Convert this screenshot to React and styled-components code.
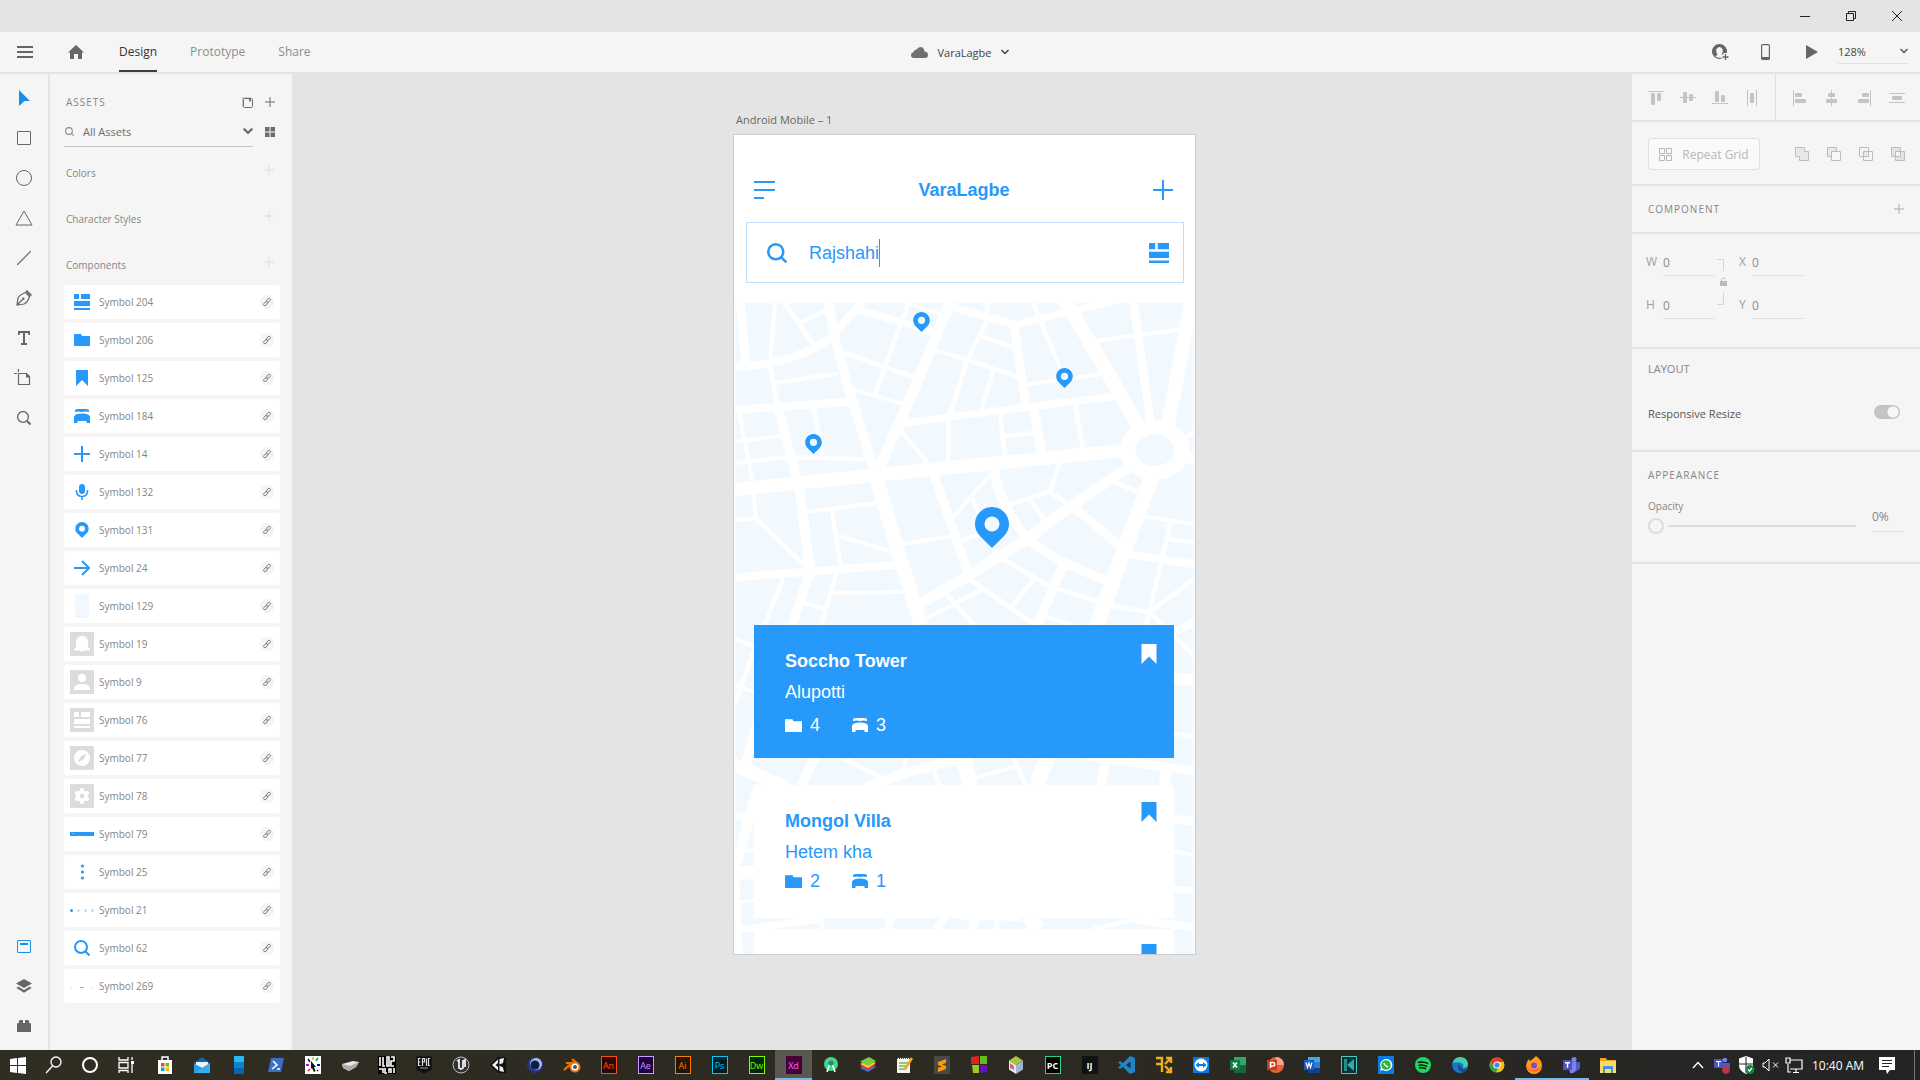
import React, { useState } from "react";
import styled, { createGlobalStyle } from "styled-components";

const ui = '"Open Sans", "Noto Sans", sans-serif';
const blue = "#2699fb";

const Global = createGlobalStyle`
  * { box-sizing: border-box; }
  body { margin: 0; font-family: ${ui}; font-size: 12px; color: #6e6e6e; background: #e4e4e4; overflow: hidden; }
  button, input, select { font: inherit; color: inherit; border: 0; background: none; padding: 0; margin: 0; outline: none; border-radius: 0; }
  button, a { display: flex; align-items: center; justify-content: center; color: inherit; text-decoration: none; }
  h1, h2, h3, p, ul { margin: 0; padding: 0; font-weight: 400; list-style: none; }
  svg { display: block; flex: none; }
`;

const Shell = styled.div`
  height: 100vh;
  display: grid;
  grid-template-rows: 32px 42px minmax(0, 1fr) 30px;
`;

/* ---------- window and top bars ---------- */
const TitleBar = styled.div`
  display: flex;
  justify-content: flex-end;
  color: #222;
`;
const WindowButton = styled.button`
  width: 46px;
`;
const TopBar = styled.header`
  display: grid;
  grid-template-columns: 1fr auto 1fr;
  background: #f5f5f5;
  border-bottom: 2px solid #e4e4e4;
`;
const TopLeft = styled.nav`
  display: flex;
  align-items: stretch;
  padding-left: 16px;
`;
const IconButton = styled.button`
  width: ${(p) => p.$w || 18}px;
  color: ${(p) => p.$color || "#666"};
`;
const Tabs = styled.div`
  display: flex;
  gap: 33px;
  margin-left: 34px;
`;
const Tab = styled.a`
  color: ${(p) => (p.$active ? "#333" : "#8e8e8e")};
  border-bottom: 2px solid ${(p) => (p.$active ? "#3c3c3c" : "transparent")};
`;
const HomeSlot = styled.div`
  display: flex;
  margin-left: 33px;
`;
const DocButton = styled.button`
  gap: 9px;
  font-size: 11px;
  color: #444;
`;
const TopRight = styled.div`
  display: flex;
  justify-content: flex-end;
  align-items: center;
  padding-right: 12px;
`;
const TopTools = styled.div`
  display: flex;
  gap: 28px;
  margin-right: 17px;
`;
const ZoomBox = styled.div`
  display: flex;
  align-items: center;
  width: 70px;
  height: 24px;
  margin-top: -1px;
  border-bottom: 1px solid #e0e0e0;
  color: #555;
  select {
    appearance: none;
    flex: 1;
    min-width: 0;
    font-size: 11px;
    color: #444;
  }
`;

/* ---------- body ---------- */
const Body = styled.div`
  display: grid;
  grid-template-columns: 50px 242px minmax(0, 1fr) 288px;
`;
const ToolBar = styled.nav`
  display: flex;
  flex-direction: column;
  justify-content: space-between;
  padding: 4px 0;
  background: #f5f5f5;
  border-right: 2px solid #e4e4e4;
`;
const ToolGroup = styled.div`
  display: flex;
  flex-direction: column;
`;
const ToolButton = styled.button`
  height: 40px;
  color: ${(p) => (p.$active ? "#1592e6" : "#666")};
`;

const AssetsPanel = styled.aside`
  background: #f5f5f5;
  padding: 16px 12px 0 14px;
`;
const PanelHeader = styled.div`
  display: flex;
  align-items: center;
  justify-content: space-between;
  height: 24px;
  padding: 0 5px 0 2px;
`;
const Caps = styled.h2`
  font-size: ${(p) => (p.$tight ? 11 : 10)}px;
  line-height: 14px;
  letter-spacing: ${(p) => (p.$tight ? 0 : 1)}px;
  color: #868686;
`;
const HeaderActions = styled.div`
  display: flex;
  gap: 12px;
  color: #6e6e6e;
`;
const FilterRow = styled.div`
  display: flex;
  align-items: center;
  justify-content: space-between;
  padding: 4px 5px 0 0;
`;
const FilterField = styled.div`
  display: flex;
  align-items: center;
  width: 189px;
  height: 29px;
  padding-bottom: 2px;
  border-bottom: 1px solid #c6c6c6;
  color: #6e6e6e;
  & > svg { color: #8e8e8e; margin-left: 1px; }
  input {
    flex: 1;
    min-width: 0;
    margin-left: 9px;
    font-size: 11px;
  }
`;
const GridToggle = styled.button`
  padding-bottom: 2px;
`;
const AssetHeading = styled.div`
  display: flex;
  align-items: center;
  justify-content: space-between;
  height: 46px;
  padding: 0 6px 0 2px;
  h3 { font-size: 10px; line-height: 14px; color: #868686; }
  button { color: #dcdcdc; margin-bottom: 6px; }
`;
const AssetGroups = styled.div`
  padding-top: 3px;
`;
const SymbolList = styled.ul`
  display: flex;
  flex-direction: column;
  gap: 4px;
  margin-top: -3px;
`;
const SymbolRow = styled.li`
  display: flex;
  align-items: center;
  height: 34px;
  padding: 0 6px;
  background: #fff;
  border-radius: 2px;
  font-size: 10px;
  color: #868686;
  span { flex: 1; margin-left: 5px; padding-bottom: 1px; }
`;
const Thumb = styled.div`
  display: grid;
  place-items: center;
  width: 24px;
  height: 24px;
  background: ${(p) => (p.$grey ? "#dcdcdc" : "transparent")};
  color: ${(p) => (p.$grey ? "#fff" : blue)};
`;
const LinkBadge = styled.button`
  width: 14px;
  height: 14px;
  border-radius: 7px;
  background: #f3f3f3;
  color: #777;
`;

/* ---------- canvas ---------- */
const Canvas = styled.main`
  display: flex;
  justify-content: center;
  padding: 37px 0 0 5px;
  overflow: hidden;
`;
const BoardColumn = styled.div`
  width: 463px;
`;
const BoardLabel = styled.p`
  height: 23px;
  padding-left: 3px;
  font-size: 11px;
  line-height: 18px;
  color: #666;
`;
const Artboard = styled.section`
  display: flex;
  flex-direction: column;
  height: 821px;
  background: #fff;
  border: 1px solid #ccc;
  font-family: "Liberation Sans", Arial, sans-serif;
  font-size: 18px;
  line-height: 20px;
  color: ${blue};
`;
const AppHeader = styled.header`
  display: flex;
  align-items: center;
  justify-content: space-between;
  padding: 0 22px 0 20px;
  margin-top: 43px;
  height: 24px;
  h1 { font-size: 18px; font-weight: 700; }
`;
const SearchBox = styled.form`
  display: flex;
  align-items: center;
  height: 61px;
  margin: 20px 11px 20px 12px;
  padding: 0 14px 0 20px;
  border: 1px solid #bfe0fd;
  input { width: 70px; margin-left: 22px; }
`;
const Caret = styled.i`
  width: 1px;
  height: 28px;
  margin-right: auto;
  background: ${blue};
`;
const MapArea = styled.div`
  position: relative;
  flex: 1;
  min-height: 0;
  overflow: hidden;
  padding: 322px 21px 0 20px;
`;
const MapLayer = styled.div`
  position: absolute;
  inset: 0;
  svg { width: 100%; height: 100%; }
`;
const PinMark = styled.button`
  position: absolute;
  left: ${(p) => p.$x}px;
  top: ${(p) => p.$y}px;
`;
const CardList = styled.div`
  position: relative;
  display: flex;
  flex-direction: column;
`;
const Card = styled.article`
  display: flex;
  justify-content: space-between;
  height: 133px;
  flex: none;
  margin-bottom: ${(p) => p.$after}px;
  padding: ${(p) => p.$top}px 17px 0 31px;
  background: ${(p) => (p.$filled ? blue : "#fff")};
  color: ${(p) => (p.$filled ? "#fff" : blue)};
  & > button { align-self: flex-start; }
`;
const CardText = styled.div`
  padding-top: ${(p) => 26 - p.$top}px;
  h2 { font-size: 18px; font-weight: 700; line-height: 20px; }
  p { line-height: 20px; margin-top: 11px; }
`;
const Counts = styled.div`
  display: flex;
  gap: 32px;
  margin-top: ${(p) => p.$gap}px;
  height: 22px;
  span { display: flex; align-items: center; gap: 8px; }
`;

/* ---------- inspector ---------- */
const Inspector = styled.aside`
  background: #f5f5f5;
`;
const Block = styled.section`
  height: ${(p) => p.$h}px;
  padding: ${(p) => p.$pad || "0 16px"};
  border-bottom: 2px solid #e4e4e4;
`;
const AlignBlock = styled(Block)`
  display: grid;
  grid-template-columns: 143px 1fr;
`;
const AlignGroup = styled.div`
  display: flex;
  align-items: center;
  justify-content: space-between;
  padding: 2px 15px 0 16px;
  color: #c4c4c4;
  & + & { border-left: 1px solid #e0e0e0; }
`;
const SplitBlock = styled(Block)`
  display: flex;
  align-items: center;
  justify-content: space-between;
`;
const RepeatButton = styled.button`
  width: 112px;
  height: 32px;
  gap: 10px;
  border: 1px solid #e0e0e0;
  border-radius: 3px;
  background: #fafafa;
  font-size: 12px;
  color: #b6b6b6;
`;
const BoolGroup = styled.div`
  display: flex;
  gap: 18px;
  margin-right: -1px;
  color: #bcbcbc;
`;
const TransformGrid = styled.div`
  display: grid;
  grid-template-columns: 17px 52px 24px 13px 52px;
  grid-template-rows: 27px 27px;
  row-gap: 16px;
  align-items: stretch;
  color: #a0a0a0;
  label { line-height: 25px; }
  input { width: 100%; border-bottom: 1px solid #e2e2e2; color: #8c8c8c; font-size: 12px; }
  & > svg { grid-column: 3; grid-row: 1 / 3; }
`;
const ToggleRow = styled.div`
  display: flex;
  align-items: center;
  justify-content: space-between;
  margin: 21px 4px 0 0;
  height: 32px;
  font-size: 11px;
  color: #555;
`;
const Toggle = styled.input`
  appearance: none;
  width: 26px;
  height: 14px;
  margin-bottom: 3px;
  border-radius: 7px;
  background: radial-gradient(circle at 19px 7px, #f8f8f8 5px, transparent 6px), #c4c4c4;
`;
const OpacityRow = styled.div`
  display: grid;
  grid-template-columns: 208px 32px;
  justify-content: space-between;
  margin-top: 12px;
  color: #868686;
  label { display: block; font-size: 10px; line-height: 14px; margin: 5px 0; color: #868686; }
`;
const Range = styled.input`
  appearance: none;
  display: block;
  width: 100%;
  height: 16px;
  &::-webkit-slider-runnable-track {
    height: 2px;
    background: linear-gradient(to right, transparent 20px, #dcdcdc 20px);
  }
  &::-webkit-slider-thumb {
    appearance: none;
    width: 16px;
    height: 16px;
    margin-top: -7px;
    border: 2px solid #dcdcdc;
    border-radius: 8px;
    background: #f5f5f5;
  }
`;
const OpacityValue = styled.input`
  width: 100%;
  height: 38px;
  padding-top: 7px;
  border-bottom: 1px solid #e0e0e0;
`;

/* ---------- taskbar ---------- */
const TaskBar = styled.footer`
  display: flex;
  justify-content: space-between;
  background: linear-gradient(to right, #302e22, #2b2921 60%, #242425);
  color: #fff;
`;
const TaskGroup = styled.div`
  display: flex;
`;
const AppButtons = styled.div`
  display: flex;
  margin-left: 2px;
`;
const TaskButton = styled.button`
  width: ${(p) => p.$w || 37}px;
  border-bottom: 2px solid ${(p) => (p.$open ? "#76b9ed" : "transparent")};
  background: ${(p) => (p.$active ? "#595852" : "none")};
  padding-top: 2px;
`;
const Badge = styled.span`
  display: grid;
  place-items: center;
  width: 16px;
  height: 18px;
  border: ${(p) => (p.$plain ? 0 : 1)}px solid ${(p) => p.$edge || p.$fg};
  background: ${(p) => p.$bg};
  color: ${(p) => p.$fg};
  font-size: 9px;
  font-weight: ${(p) => (p.$bold ? 700 : 400)};
  line-height: 9px;
`;
const Clock = styled.time`
  display: grid;
  place-items: center;
  width: 64px;
  font-size: 12px;
`;
const Edge = styled.span`
  width: 6px;
  margin-left: 10px;
  border-left: 1px solid #777;
`;

/* ---------- icons ---------- */
function Svg({ w = 16, h, vb, children, ...rest }) {
  return (
    <svg width={w} height={h || w} viewBox={vb || `0 0 ${w} ${h || w}`} fill="currentColor" aria-hidden="true" {...rest}>
      {children}
    </svg>
  );
}
const line = { fill: "none", stroke: "currentColor" };

const Plus = ({ s = 10, t = 1 }) => (
  <Svg w={s} vb="0 0 20 20"><path {...line} strokeWidth={(t * 20) / s} d="M10 0V20M0 10H20" /></Svg>
);
const Chevron = ({ w = 8, t = 1.5 }) => (
  <Svg w={w} h={Math.round(w * 0.75)} vb="0 0 8 6"><path {...line} strokeWidth={t} d="M.5 1L4 4.500 7.500 1" /></Svg>
);
const Dashboard = ({ s = 16 }) => (
  <Svg w={s} vb="0 0 16 16"><path d="M0 0h5v5H0zM7 0h9v5H7zM0 7h16v5H0zM0 14h16v2H0z" /></Svg>
);
const Folder = () => <Svg w={17} h={13} vb="0 0 16 12"><path d="M0 0h7l1 2h8v10H0z" /></Svg>;
const Bookmark = ({ w = 12, h = 16 }) => <Svg w={w} h={h} vb="0 0 12 16"><path d="M0 0h12v16L6 10 0 16z" /></Svg>;
const Bed = () => (
  <Svg w={16} h={16}><path d="M1 4V2.500Q1 1 3.500 1H12.500Q15 1 15 2.500V4Q11 3.200 8.500 4H7.500Q5 3.200 1 4zM0 8.500Q1.500 5.500 8 5.500T16 8.500V15H12.500V13H3.500V15H0z" /></Svg>
);
const Mic = () => (
  <Svg w={16}><rect x="5" y="0" width="6" height="10" rx="3" /><path {...line} strokeWidth="1.600" d="M2.500 6V7.500a5.500 5 0 0 0 11 0V6M8 12.500V16" /></Svg>
);
const Pin = ({ w = 14, h = 16 }) => (
  <Svg w={w} h={h} vb="0 0 34 41">
    <path fillRule="evenodd" d="M17 0C7.600 0 0 7.600 0 17c0 5 2 9 5 12L17 41 29 29c3-3 5-7 5-12C34 7.600 26.400 0 17 0zM17 9.500a7.500 7.500 0 1 1 0 15 7.500 7.500 0 0 1 0-15z" />
  </Svg>
);
const Arrow = () => <Svg><path {...line} strokeWidth="2" d="M0 8H15M8 1L15 8 8 15" /></Svg>;
const Magnifier = ({ s = 16, t = 2 }) => (
  <Svg w={s} vb="0 0 16 16"><circle {...line} strokeWidth={t} cx="7" cy="7" r="6" /><path {...line} strokeWidth={t} d="M11 11L15.500 15.500" /></Svg>
);
const Bell = () => <Svg><path d="M8 0C11.500 0 14 2.500 14 6V11l2 2v1.500H10L8 16 6 14.500H0V13l2-2V6C2 2.500 4.500 0 8 0z" /></Svg>;
const Person = () => <Svg><circle cx="8" cy="4" r="4" /><path d="M0 16V14Q1 10 8 10t8 4v2z" /></Svg>;
const Compass = () => <Svg><path fillRule="evenodd" d="M8 0a8 8 0 1 0 0 16A8 8 0 0 0 8 0zM12.500 3.500L9.500 9.500 3.500 12.500 6.500 6.500z" /></Svg>;
const Gear = () => (
  <Svg><path fillRule="evenodd" d="M6.500 0h3l.6 2.500 1.500.9L14 2.600l1.600 2.700-1.800 1.800v1.800l1.800 1.800L14 13.400l-2.400-.8-1.500.9L9.500 16h-3l-.6-2.500-1.500-.9-2.400.8L.4 10.700l1.800-1.800V7.100L.4 5.300 2 2.600l2.400.8 1.500-.9zM8 5.800a2.200 2.200 0 1 0 0 4.400 2.200 2.200 0 0 0 0-4.400z" /></Svg>
);
const LinkIcon = () => (
  <Svg w={8} vb="0 0 8 8"><g {...line} strokeWidth=".9" transform="rotate(-50 4 4)"><rect x="-.5" y="2.700" width="4.600" height="2.600" rx="1.300" /><rect x="3.900" y="2.700" width="4.600" height="2.600" rx="1.300" /></g></Svg>
);

const Texture = () => (
  <Svg w={14} h={24}><rect width="14" height="24" fill="#f0f8ff" /><path stroke="#fff" strokeWidth=".5" d="M0 8L14 6M3 0L8 24M14 14L2 20M11 0L9 12" /></Svg>
);
const Bar = () => <Svg w={24} h={24}><rect y="10" width="24" height="4" fill={blue} /><path fill="#fff" d="M3 11h1v1H3z" opacity=".7" /></Svg>;
const DotsV = () => <Svg w={16}><circle cx="8.500" cy="2" r="1.600" /><circle cx="8.500" cy="8" r="1.600" /><circle cx="8.500" cy="14" r="1.600" /></Svg>;
const DotsH = () => <Svg w={24}><circle cx="1.500" cy="12.500" r="1.500" /><g opacity=".3"><circle cx="8.500" cy="12.500" r="1.500" /><circle cx="15.500" cy="12.500" r="1.500" /><circle cx="22.500" cy="12.500" r="1.500" /></g></Svg>;
const Specks = () => <Svg w={24}><path d="M10 13h4v1h-4z" opacity=".7" /><path d="M1 13h1v1H1zM22 13h1v1h-1z" opacity=".4" /></Svg>;

const symbols = [
  ["Symbol 204", <Dashboard />],
  ["Symbol 206", <Svg w={16} h={12}><path d="M0 0h7l1 2h8v10H0z" /></Svg>],
  ["Symbol 125", <Bookmark />],
  ["Symbol 184", <Bed />],
  ["Symbol 14", <Plus s={16} t={2} />],
  ["Symbol 132", <Mic />],
  ["Symbol 131", <Pin />],
  ["Symbol 24", <Arrow />],
  ["Symbol 129", <Texture />],
  ["Symbol 19", <Bell />, true],
  ["Symbol 9", <Person />, true],
  ["Symbol 76", <Dashboard />, true],
  ["Symbol 77", <Compass />, true],
  ["Symbol 78", <Gear />, true],
  ["Symbol 79", <Bar />],
  ["Symbol 25", <DotsV />],
  ["Symbol 21", <DotsH />],
  ["Symbol 62", <Magnifier />],
  ["Symbol 269", <Specks />],
];

const tools = [
  ["Select", <Svg w={11} h={16}><path d="M0 0L11 11H5.500L0 16z" /></Svg>],
  ["Rectangle", <Svg w={14}><rect {...line} x=".5" y=".5" width="13" height="13" rx=".5" /></Svg>],
  ["Ellipse", <Svg w={16}><circle {...line} cx="8" cy="8" r="7.500" /></Svg>],
  ["Polygon", <Svg w={18} h={16}><path {...line} d="M9 1L17 15H1z" /></Svg>],
  ["Line", <Svg w={14}><path {...line} strokeWidth="1.200" d="M0 14L14 0" /></Svg>],
  ["Pen", <Svg w={16}><path {...line} strokeWidth="1.200" d="M1 15L2 8Q4 4.500 9.500 2.500L13.500 6.500Q12 12 8 14zM1 15L6.500 9.500" /><circle cx="7.300" cy="8.800" r="1.200" /><path d="M9.500 1.500L11 0l5 5-1.500 1.500z" /></Svg>],
  ["Text", <Svg w={12} h={14}><path d="M0 0h12v4h-1.500L10 2H7v10h2v2H3v-2h2V2H2L1.500 4H0z" /></Svg>],
  ["Artboard", <Svg w={20} h={18}><path {...line} strokeWidth="1.200" d="M4.500 0V3M0 4.500H3M4.500 4.500H12.500L15.500 7.500V15.500H4.500z" /><path d="M12 4L16 8.500H12z" /></Svg>],
  ["Zoom", <Svg w={14}><circle {...line} strokeWidth="1.300" cx="6" cy="6" r="5.400" /><path {...line} strokeWidth="2" d="M10 10L13.500 13.500" /></Svg>],
];
const panels = [
  ["Assets", <Svg w={14} h={13}><rect {...line} x=".5" y=".5" width="13" height="12" rx=".5" /><path d="M3 3h8v2H3z" /></Svg>],
  ["Layers", <Svg w={16} h={14}><path d="M8 0L16 4.500 8 9 0 4.500zM2 7.500L8 11 14 7.500 15.500 9 8 13.800.5 9z" /></Svg>],
  ["Plugins", <Svg w={14} h={12}><path d="M0 4Q0 3 1 3H2V1Q2 0 3 0H5Q6 0 6 1V3H8V1Q8 0 9 0h2q1 0 1 1V3h1q1 0 1 1v8H0z" /></Svg>],
];

const alignA = [
  ["Align top", <Svg><path d="M0 1h16v1H0z" /><rect x="3" y="3" width="4" height="12" rx="1" /><rect x="9" y="3" width="4" height="8" rx="1" /></Svg>],
  ["Align middle", <Svg><path d="M0 7h16v1H0z" /><rect x="3" y="2" width="4" height="11" rx="1" /><rect x="9" y="4" width="4" height="7" rx="1" /></Svg>],
  ["Align bottom", <Svg><path d="M0 13h16v1H0z" /><rect x="3" y="1" width="4" height="11" rx="1" /><rect x="9" y="5" width="4" height="7" rx="1" /></Svg>],
  ["Distribute horizontally", <Svg><path d="M3 0h1v16H3zM12 0h1v16h-1z" /><rect x="6" y="3" width="4" height="10" rx="1" /></Svg>],
];
const alignB = [
  ["Align left", <Svg><path d="M1 0h1v16H1z" /><rect x="3" y="3" width="7" height="4" rx="1" /><rect x="3" y="9" width="11" height="4" rx="1" /></Svg>],
  ["Align center", <Svg><path d="M7 0h1v16H7z" /><rect x="4" y="3" width="7" height="4" rx="1" /><rect x="2" y="9" width="11" height="4" rx="1" /></Svg>],
  ["Align right", <Svg><path d="M13 0h1v16h-1z" /><rect x="5" y="3" width="7" height="4" rx="1" /><rect x="1" y="9" width="11" height="4" rx="1" /></Svg>],
  ["Distribute vertically", <Svg><path d="M0 3h16v1H0zM0 12h16v1H0z" /><rect x="3" y="6" width="10" height="4" rx="1" /></Svg>],
];
const bools = [
  ["Add", <Svg w={14}><path {...line} fill="#e8e8e8" d="M.5.5H9.500V4.500H13.500V13.500H4.500V9.500H.5z" /></Svg>],
  ["Subtract", <Svg w={14}><path {...line} fill="#e8e8e8" d="M.5.5H9.500V9.500H.5z" /><path {...line} fill="#f8f8f8" d="M4.500 4.500H13.500V13.500H4.500z" /></Svg>],
  ["Intersect", <Svg w={14}><path fill="#e8e8e8" d="M4.500 4.500h5v5h-5z" /><path {...line} d="M.5.5H9.500V9.500H.5zM4.500 4.500H13.500V13.500H4.500z" /></Svg>],
  ["Exclude overlap", <Svg w={14}><path {...line} fill="#e4e4e4" fillRule="evenodd" d="M.5.5H9.500V9.500H.5zM4.500 4.500H13.500V13.500H4.500z" /></Svg>],
];

/* ---------- street map ---------- */
const roads = [
  [27, "M61 0L78 190"],
  [24, "M40 194C90 188 120 186 148 180Q270 155 335 100L430 -5"],
  [12, "M165 0L150 180"], [13, "M150 180L170 300"],
  [14, "M190 -5L285 130"], [12, "M240 58L320 22"],
  [28, "M325 -5L346 110L390 270L465 510"],
  [43, "M465 515L472 538L602 966"],
  [22, "M420 22L640 86"], [13, "M568 -5L535 80L465 275"], [10, "M565 3L670 35"],
  [32, "M692 -5L590 240L480 490"],
  [24, "M695 12L885 65"], [22, "M885 65L1190 -8"],
  [26, "M882 65L918 305"], [28, "M940 310L965 450"],
  [12, "M635 138L740 170L895 222"], [14, "M805 -5L797 60L740 175L690 335"],
  [12, "M785 100L885 135"], [13, "M820 200L783 325"],
  [12, "M937 -5L1020 195"], [12, "M915 246L1145 213"],
  [42, "M1035 -8L1058 31L1205 281L1262 380"],
  [25, "M1240 -5L1293 370"], [42, "M1414 -5L1358 291L1340 380"],
  [12, "M1125 114L1385 79"], [13, "M355 143L585 224"],
  [12, "M160 241L355 211"], [12, "M390 257L545 302"],
  [24, "M40 321L390 296"], [28, "M172 305L228 521"], [30, "M233 520L238 558L270 800"],
  [12, "M58 331L97 531"], [11, "M40 416L185 399"],
  [12, "M40 481L200 462L435 469"], [13, "M280 310L308 456"],
  [40, "M40 560L470 516L830 480L1215 442"],
  [22, "M545 361L920 312L1190 280"],
  [14, "M685 351V480"], [13, "M540 379L628 486"], [13, "M840 331L855 460"],
  [12, "M850 400L945 389"], [14, "M1065 300L1089 440"],
  [46, "M1295 520L1130 966L950 1446"],
  [32, "M1235 487L1050 611L930 702L740 821L600 902"],
  [28, "M820 495Q840 610 920 705"], [26, "M910 695Q980 765 1165 835"],
  [27, "M640 510L748 820"], [12, "M812 514L700 641"],
  [13, "M757 586L832 760"], [12, "M725 712L800 685"], [12, "M550 722L700 699"],
  [13, "M1020 475L990 566L868 606"], [14, "M985 562L1060 616"], [26, "M1062 614L1205 733"],
  [13, "M930 591L978 660"], [13, "M1175 534L1262 571"],
  [12, "M1275 641L1430 665"], [13, "M1352 656L1288 928L1278 970"],
  [12, "M1345 709L1430 719"], [24, "M1230 755L1430 785"],
  [13, "M1430 822L1288 928L1170 908"], [12, "M1290 929L1335 975"],
  [13, "M840 763L990 851L1145 898"], [14, "M942 829L870 916"],
  [28, "M1030 785L950 970"], [12, "M970 939L1065 968"], [14, "M745 826L945 966"],
  [14, "M672 864L765 970"], [12, "M788 859L612 950"],
  [12, "M40 653L107 646L101 570"], [14, "M103 642L262 795"],
  [12, "M258 626L468 601"], [13, "M335 618L362 790"], [12, "M350 697L518 747"],
  [24, "M40 823L525 786"], [29, "M272 800L215 970"], [13, "M190 826L132 970"],
  [13, "M348 811L303 970"], [12, "M335 871L550 866"], [12, "M250 899L318 919"],
  [12, "M40 1007L108 1031"], [14, "M103 1040L45 1201"], [12, "M45 1146L105 1168"],
  [30, "M112 1260L75 1395"], [40, "M40 1384L200 1455"], [28, "M285 1360L243 1450"],
  [14, "M365 1362L500 1434"], [12, "M560 1360L546 1410"], [28, "M720 1370Q560 1400 430 1458"],
  [13, "M640 1395L658 1450"], [46, "M728 1360L752 1450"], [12, "M762 1426L888 1390"],
  [14, "M880 1360L918 1450"], [28, "M1160 1360L1143 1450"], [26, "M1100 1360L1430 1405"],
  [32, "M1340 1395L1332 1450"], [22, "M1355 994L1430 952"], [14, "M1362 998L1430 1066"],
  [34, "M1360 1126L1430 1132"], [12, "M1355 1290L1430 1304"], [26, "M1350 1546L1430 1557"],
  [12, "M1350 1643L1430 1657"], [20, "M1350 1757L1430 1765"], [24, "M1250 1850L1430 1874"],
  [24, "M40 1541H110"], [32, "M112 1460L50 1680"], [12, "M40 1641L110 1643"],
  [40, "M40 1709H110"], [10, "M40 1796L110 1793"], [18, "M45 1640L60 1960"],
  [22, "M50 1882L300 1848"], [14, "M300 1840L310 1880"], [26, "M515 1840L502 1880"],
  [24, "M680 1838L650 1880"], [30, "M770 1840L755 1880"], [14, "M830 1845L828 1880"],
  [14, "M720 1845L900 1846"], [46, "M925 1838L955 1880"], [14, "M1250 1848L1120 1878"],
  [8, "M42 0V1953M1424 0V1953"],
];

function StreetMap() {
  return (
    <MapLayer>
      <svg viewBox="42 0 1383 1953" preserveAspectRatio="xMinYMin slice" aria-hidden="true">
        <rect x="42" width="1383" height="1953" fill="#f1f9ff" />
        <g fill="none" stroke="#fff">
          {roads.map(([w, d]) => <path key={d} strokeWidth={w} d={d} />)}
        </g>
        <ellipse cx="1305" cy="441" rx="106" ry="89" fill="#fff" />
        <ellipse cx="1305" cy="441" rx="58" ry="48" fill="#f1f9ff" />
        <path stroke="#fff" strokeWidth="12" d="M1390 405L1430 385" />
        <path stroke="#fff" strokeWidth="34" d="M1385 462L1430 468" />
      </svg>
    </MapLayer>
  );
}

function Listing({ title, area, rooms, beds, filled, top, gap, after }) {
  return (
    <Card $filled={filled} $top={top} $after={after}>
      <CardText $top={top}>
        {title && (
          <>
            <h2>{title}</h2>
            <p>{area}</p>
            <Counts $gap={gap}>
              <span><Folder />{rooms}</span>
              <span><Bed />{beds}</span>
            </Counts>
          </>
        )}
      </CardText>
      <button aria-label="Bookmark"><Bookmark w={16} h={20} /></button>
    </Card>
  );
}

/* ---------- taskbar icons ---------- */
const T = (props) => <Svg w={18} {...props} />;
const startApps = [
  ["Start", <T><path d="M1 3l7-1v7H1zM9 2l8-1v8H9zM1 10h7v7l-7-1zM9 10h8v8l-8-1z" /></T>],
  ["Search", <T><circle {...line} strokeWidth="1.300" cx="11" cy="6" r="5" /><path {...line} strokeWidth="1.300" d="M7.500 10L1 17" /></T>],
  ["Cortana", <T><circle {...line} strokeWidth="2" cx="9" cy="9" r="7" /></T>],
  ["Task view", <T><path {...line} strokeWidth="1.300" d="M2 1V4H11V1M2 6.500H11V12H2zM2 17V14.500H11V17M15 1V4M15 7V17" /><path d="M14 5h3v3h-3z" /></T>],
];
const apps = [
  ["Store", <T><path {...line} strokeWidth="1.500" d="M6 5V1H12V5" /><path d="M2 4h14v14H2z" /><path fill="#f25022" d="M5 7h3.500v3.500H5z" /><path fill="#7fba00" d="M9.500 7H13v3.500H9.500z" /><path fill="#00a4ef" d="M5 11.500h3.500V15H5z" /><path fill="#ffb900" d="M9.500 11.500H13V15H9.500z" /></T>],
  ["Mail", <T><path fill="#0f64b5" d="M1 7l8-6 8 6v10H1z" /><path fill="#e8f4fb" d="M3 6h12v3l-6 3-6-3z" /><path fill="#27a0ea" d="M1 7l8 6 8-6v10H1z" /><path fill="#36aef0" d="M1 17l16-10v10z" /></T>],
  ["Phone", <T><path fill="#2bb9ea" d="M4 0h10v18H4z" /><path fill="#0a84d0" d="M4 6h10v12H4z" /><path fill="#0764b0" d="M4 12h10v6H4z" /></T>],
  ["PowerShell", <T><path fill="#3a6fc4" d="M4 2h13l-3 14H1z" /><path fill="none" stroke="#fff" strokeWidth="1.600" d="M6 5l4 4-5 4M10 13h3" /></T>],
  ["Cursor tool", <T><path fill="#fff" d="M1 0h16v18H1z" /><path stroke="#d0d" strokeWidth="2" d="M2 9h3" /><path stroke="#00f" strokeWidth="2" d="M13 9h3" /><path stroke="#fa0" strokeWidth="1.500" d="M9 1v3" /><path stroke="#0a4" strokeWidth="1.500" d="M12 5l2-3" /><path stroke="#d22" strokeWidth="1.500" d="M4 15l2-2" /><path stroke="#222" strokeWidth="1.500" d="M4 3l2 3M14 15l-1-1" /><path fill="#111" d="M7 5l5 6h-2l1.500 4-1.500 1-2-4-1 1z" /></T>],
  ["SketchBook", <T><path fill="#e6e6e6" d="M1 8l11-3 6 1-3 5-7 4-6-3z" /><path fill="#aaa" d="M1 8l8 2 9-4-3 5-7 4-6-3z" /></T>],
  ["Pencil", <T><path fill="#000" d="M0 0h18v18H0z" /><path stroke="#fff" strokeWidth="1.600" fill="none" d="M2 1v9M5 1v9h2M9 1h2v9H9zM13 1h3v4h-3v5h3M1 13h4v4M7 12v5h2M11 17v-4h2v4M16 12v5" /></T>],
  ["Epic Games", <T><path fill="#111" stroke="#333" strokeWidth=".6" d="M1 0h16v14l-8 4-8-4z" /><path stroke="#ddd" fill="none" strokeWidth="1.200" d="M5.500 2.500H3.500v7h2M3.500 6h2M7.500 10V2.500H9.500v3.500H7.500M11.500 2.500v7.500M15 2.500h-1.500v7H15" /><path stroke="#999" d="M5 12h8" /></T>],
  ["Unreal", <T><circle cx="9" cy="9" r="8" fill="#333" stroke="#bbb" /><path stroke="#eee" fill="none" strokeWidth="1.800" d="M5 5l2-1v8l2 1 2-1V5l2-1v7" /></T>],
  ["Unity", <T><path fill="#111" d="M1 9L9 1l8 0v16l-8 0z" /><path fill="#f0f0f0" d="M3 9L9 3.500V7L6.500 9 9 11v3.500zM10.500 3L15 2l-1 5-3.500 1.500zM10.500 9.500L14 11.500 15 16l-4.500-1z" /></T>],
  ["Cinema 4D", <T><circle cx="9" cy="9" r="8" fill="#24377e" /><circle cx="10" cy="8" r="6" fill="#aebbe4" /><circle cx="9" cy="9" r="4.500" fill="#0d1c4a" /></T>],
  ["Blender", <T><path stroke="#ea7600" strokeWidth="2.200" fill="none" d="M1 14l9-8M3 7h9M9 3l5 4" /><circle cx="12" cy="11" r="5.500" fill="#ea7600" /><circle cx="12" cy="11" r="3.500" fill="#fff" /><circle cx="12" cy="11" r="2" fill="#265787" /></T>],
  ["Animate", <Badge $fg="#ff4a1c" $bg="#2a0a00">An</Badge>],
  ["After Effects", <Badge $fg="#cf96fd" $bg="#1f0040">Ae</Badge>],
  ["Illustrator", <Badge $fg="#ff7c00" $bg="#261300">Ai</Badge>],
  ["Photoshop", <Badge $fg="#00c8ff" $bg="#001d26">Ps</Badge>],
  ["Dreamweaver", <Badge $fg="#75ff00" $bg="#002606">Dw</Badge>],
  ["XD", <Badge $plain $fg="#ff61f6" $bg="#470137">Xd</Badge>, "active"],
  ["Android Studio", <T><circle cx="9" cy="8" r="7" fill="#3ddc84" /><path stroke="#fff" strokeWidth="1.600" fill="none" d="M9 5L5 16M9 5l4 11" /><circle cx="9" cy="7" r="2.600" fill="#3a7d96" /></T>],
  ["BlueStacks", <T><path fill="#3573d8" d="M1 12l8 4 8-5-8-3z" /><path fill="#e33" d="M1 10l8 4 8-5-8-3z" /><path fill="#fc3" d="M1 8l8 4 8-5-8-3z" /><path fill="#7c4" d="M1 5.500L10 1l7 4-8 5z" /></T>],
  ["Notepad++", <T><path fill="#f4f4f4" d="M1 2h13v15H1z" /><path stroke="#7b5" strokeWidth="1.500" d="M3 7h9M3 10h8M3 13h7" /><path stroke="#444" strokeWidth="2" strokeDasharray="1 1" d="M1 2h13" /><path stroke="#f3a51c" strokeWidth="2.500" d="M9 13l7-11" /></T>],
  ["Sublime Text", <T><path fill="#484848" d="M1 0h16v18H1z" /><path fill="#ff9800" d="M5 6l8-3v4l-4 1.500L13 10v3l-8 3v-4l4-1.500L5 9z" /></T>],
  ["WinMerge", <T><path fill="#d22" d="M1 1l8-1v8H1z" /><path fill="#6b2" d="M10 0h7v8h-7z" /><path fill="#9c2" d="M2 9h7v8h-6z" /><path fill="#61b" d="M10 9h7v7l-7 1z" /></T>],
  ["NetBeans", <T><path fill="#a6c73a" d="M9 0l7 4.500-7 4.500-7-4.500z" /><path fill="#e8e8ef" d="M2 4.500L9 9v9l-7-4.500z" /><path fill="#9db5da" d="M16 4.500L9 9v9l7-4.500z" /><path fill="#c33" d="M3 7l4 3v4l-4-2z" opacity=".7" /></T>],
  ["PyCharm", <Badge $bold $edge="#21d789" $fg="#fff" $bg="#000">PC</Badge>],
  ["IntelliJ IDEA", <Badge $bold $plain $fg="#fff" $bg="#111">IJ</Badge>],
  ["VS Code", <T><path fill="#1f86cc" d="M12 0l5 2v14l-5 2-7-7-3 2-2-1.500L3 9 0 6.500 2 5l3 2zM12.500 5.500L8 9l4.500 3.500z" fillRule="evenodd" /></T>],
  ["VMware", <T><path stroke="#edb01c" strokeWidth="2.400" fill="none" d="M1 2h6v6H1M11 2h5v5M16 2l-6 6M16 11v5h-5M10 10l6 6M7 8v8" /></T>],
  ["TeamViewer", <T><path fill="#0a7be0" d="M1 1h16v16H1z" /><circle cx="9" cy="9" r="6.500" fill="#fff" /><path fill="#0a7be0" d="M3.500 9L7 6v2h4V6l3.500 3L11 12v-2H7v2z" /></T>],
  ["Excel", <T><path fill="#2faa6a" d="M5 1h12v16H5z" /><path fill="#17643d" d="M11 9h6v8h-12v-4h6z" /><path fill="#107c41" d="M1 4h10v10H1z" /><path stroke="#fff" strokeWidth="1.600" d="M4 6.500l4 5M8 6.500l-4 5" /></T>],
  ["PowerPoint", <T><circle cx="10" cy="9" r="8" fill="#e8603c" /><path fill="#ffa088" d="M10 1a8 8 0 0 1 8 8h-8z" /><path fill="#c43e1c" d="M1 4h10v10H1z" /><path stroke="#fff" strokeWidth="1.500" fill="none" d="M4.500 12V6.500H7a1.500 1.500 0 0 1 0 3.500H5" /></T>],
  ["Word", <T><path fill="#41a5ee" d="M5 1h12v5H5z" /><path fill="#2b7cd3" d="M5 6h12v6H5z" /><path fill="#103f91" d="M5 12h12v5H5z" /><path fill="#185abd" d="M1 4h10v10H1z" /><path stroke="#fff" strokeWidth="1.200" fill="none" d="M3 6.500l1.500 5L6 7l1.500 4.500 1.500-5" /></T>],
  ["Filmora", <T><path fill="#08303a" stroke="#45cdbf" d="M1.500 .5h15v17h-15z" /><path fill="#1f8f88" d="M4 3h3v12H4z" /><path fill="#41c9bb" d="M7 9l7-6v12z" opacity=".8" /></T>],
  ["WhatsApp", <T><path fill="#0a7be0" d="M1 0h16v18H1z" /><path fill="#fff" d="M9 3a6 6 0 1 1-3 11l-3 1 1-3A6 6 0 0 1 9 3z" /><circle cx="9" cy="9" r="4.800" fill="#2cb742" /><path stroke="#fff" strokeWidth="1.400" fill="none" d="M7 7q.5 3 4 4" /></T>],
  ["Spotify", <T><circle cx="9" cy="9" r="8" fill="#1ed760" /><path stroke="#111" strokeWidth="1.500" fill="none" d="M4 6.500q5-1.500 10 1M4.500 9.500q4-1.200 8.500 1M5 12q3.500-1 7 .8" /></T>],
  ["Edge", <T><circle cx="9" cy="9" r="8" fill="#1b75c9" /><path fill="#45d0a8" d="M1.500 7Q4 1 9 1q7 0 8 7 0 4-5 3.500 1.500-4-3-5Q4 6 1.500 7z" /><path fill="#114a8b" d="M8 8q-3 5 3 8 4-.5 5-3-5 2-8-5z" /></T>],
  ["Chrome", <T><circle cx="9" cy="9" r="7.500" fill="#fbc116" /><path fill="#e33b2e" d="M2 6Q4.500 1.500 9 1.500T16 6H9L6 10z" /><path fill="#2ba24c" d="M2 6l4.500 6H10l-2 4.500Q0 15 2 6z" /><circle cx="9" cy="9" r="3.500" fill="#fff" /><circle cx="9" cy="9" r="2.600" fill="#4285f4" /></T>],
  ["Firefox", <T><path fill="#ff9a1f" d="M9 2l2-2q6 4 6 10a8 8 0 0 1-16 0q0-4 3-7l1 2z" /><path fill="#ff4f3a" d="M1 9q2 6 9 5 4-1 6-3a8 8 0 0 1-15-2z" /><circle cx="9" cy="9.500" r="3" fill="#7a4cd8" /></T>, "open"],
  ["Teams", <T><circle cx="12" cy="3.500" r="2.500" fill="#7b83eb" /><path fill="#5059c9" d="M11 6h7v6q-2 4-5 3z" /><path fill="#7b83eb" d="M6 6h8v8q-2 4-6 3z" /><path fill="#4b53bc" d="M1 4h9v10H1z" /><path stroke="#fff" strokeWidth="1.400" d="M3 6.700h5M5.500 6.700v5" /></T>, "open"],
  ["Explorer", <T><path fill="#e9a91c" d="M1 2h6l1 2h9v4H1z" /><path fill="#ffd968" d="M1 5h16v12H1z" /><path fill="#3c97e0" d="M4 10h10v7h-2v-4H6v4H4z" /></T>],
];
const tray = [
  ["Show hidden icons", <Svg w={12} h={8}><path {...line} strokeWidth="1.400" d="M1 7L6 1.500 11 7" /></Svg>],
  ["Teams status", <T><circle cx="12" cy="4" r="2.300" fill="#7b83eb" /><path fill="#5059c9" d="M7 7h10v5H7z" /><path fill="#4b53bc" d="M1 3h9v9H1z" /><path stroke="#fff" strokeWidth="1.200" d="M3 5.500h5M5.500 5.500v5" /><circle cx="13" cy="14" r="3.800" fill="#c4314b" /></T>],
  ["Security", <T><path d="M9 0l7 2.500V9q0 6-7 9-7-3-7-9V2.500z" /><path stroke="#222" strokeWidth="1" d="M9 1v16M2 8h14" /><circle cx="13" cy="13.500" r="4.500" fill="#10893e" /><path stroke="#fff" strokeWidth="1.200" fill="none" d="M11 13.500l1.500 1.500 2.500-3" /></T>],
  ["Muted", <T><path {...line} d="M2 7h2l4-4v12l-4-4H2zM12 6.500l5 5M17 6.500l-5 5" /></T>],
  ["Network", <T><path {...line} strokeWidth="1.200" d="M5 4H17V13H5M11 13V16M8 16.500H14M3 8V16H6M1 2H5V7H1z" /></T>],
];

export default function App() {
  const [query, setQuery] = useState("Rajshahi");
  const [filter, setFilter] = useState("All Assets");
  const [opacity, setOpacity] = useState(0);
  const [resize, setResize] = useState(true);

  return (
    <>
      <Global />
      <Shell>
        <TitleBar>
          <WindowButton aria-label="Minimize"><Svg w={10}><path {...line} d="M0 5.500H10" /></Svg></WindowButton>
          <WindowButton aria-label="Restore"><Svg w={10}><path {...line} d="M.5 2.500H7.500V9.500H.5zM2.500 2.500V.5H9.500V7.500H7.500" /></Svg></WindowButton>
          <WindowButton aria-label="Close"><Svg w={10}><path {...line} d="M0 0L10 10M10 0L0 10" /></Svg></WindowButton>
        </TitleBar>

        <TopBar>
          <TopLeft>
            <IconButton aria-label="Menu"><Svg w={16} h={12}><path d="M0 0h16v2H0zM0 5h16v2H0zM0 10h16v2H0z" /></Svg></IconButton>
            <HomeSlot>
              <IconButton aria-label="Home"><Svg w={16} h={14}><path d="M8 0L16 7.500H14V14H10V9H6V14H2V7.500H0z" /></Svg></IconButton>
            </HomeSlot>
            <Tabs>
              <Tab href="#design" $active>Design</Tab>
              <Tab href="#prototype">Prototype</Tab>
              <Tab href="#share">Share</Tab>
            </Tabs>
          </TopLeft>
          <DocButton>
            <Svg w={17} h={11}><path fill="#707070" d="M3 11Q0 11 0 8 0 5.500 2.500 5.200 3 2.500 5.500 2.500 7 0 9.500 0 13 0 13.500 4.500 17 4.500 17 8 17 11 14 11z" /></Svg>
            VaraLagbe
            <Chevron />
          </DocButton>
          <TopRight>
            <TopTools>
              <IconButton aria-label="Invite"><Svg w={17} h={16}><circle {...line} strokeWidth="1.200" cx="7.500" cy="7.500" r="6.900" /><path fillRule="evenodd" d="M7.500 .5a7 7 0 0 0-5 12L5.500 11Q4 8.500 4.300 5.500 5 3 7.500 3T10.700 5.500Q11 8.500 9.500 11L13 12Q15 9.500 14.500 6.500 13 .5 7.500 .5z" /><path stroke="#f5f5f5" strokeWidth="5" d="M14 9V16M9.500 13H17" /><path {...line} strokeWidth="1.300" d="M13.500 10V16M10.500 13H16.500" /></Svg></IconButton>
              <IconButton aria-label="Device preview"><Svg w={10} h={16}><rect {...line} x=".6" y=".6" width="7.800" height="14.800" rx="1" strokeWidth="1.200" /><path d="M0 13h9v2H0z" /></Svg></IconButton>
              <IconButton aria-label="Play"><Svg w={12} h={14}><path d="M0 0L12 7 0 14z" /></Svg></IconButton>
            </TopTools>
            <ZoomBox>
              <select aria-label="Zoom level" defaultValue="128%"><option>128%</option><option>100%</option></select>
              <Chevron />
            </ZoomBox>
          </TopRight>
        </TopBar>

        <Body>
          <ToolBar>
            <ToolGroup>
              {tools.map(([name, icon], i) => <ToolButton key={name} aria-label={name} $active={i === 0}>{icon}</ToolButton>)}
            </ToolGroup>
            <ToolGroup>
              {panels.map(([name, icon], i) => <ToolButton key={name} aria-label={name} $active={i === 0}>{icon}</ToolButton>)}
            </ToolGroup>
          </ToolBar>

          <AssetsPanel>
            <PanelHeader>
              <Caps>ASSETS</Caps>
              <HeaderActions>
                <button aria-label="Library"><Svg w={11}><path fill="#ccc" d="M0 0h9v2H2v8H0z" /><rect {...line} x="1.500" y="1.500" width="9" height="9" rx="1" /><path d="M7 1h2v4L8 4 7 5z" /></Svg></button>
                <button aria-label="Add asset"><Plus s={10} /></button>
              </HeaderActions>
            </PanelHeader>
            <FilterRow>
              <FilterField>
                <Magnifier s={9} t={2} />
                <input aria-label="Filter assets" value={filter} onChange={(e) => setFilter(e.target.value)} />
                <button aria-label="Asset types"><Chevron w={10} t={1.800} /></button>
              </FilterField>
              <GridToggle aria-label="Grid view"><Svg w={10}><path d="M0 0h4.500v4.500H0zM5.500 0H10v4.500H5.500zM0 5.500h4.500V10H0zM5.500 5.500H10V10H5.500z" /></Svg></GridToggle>
            </FilterRow>
            <AssetGroups>
              {["Colors", "Character Styles", "Components"].map((name) => (
                <AssetHeading key={name}>
                  <h3>{name}</h3>
                  <button aria-label={`Add ${name}`}><Plus s={10} /></button>
                </AssetHeading>
              ))}
            </AssetGroups>
            <SymbolList>
              {symbols.map(([name, icon, grey]) => (
                <SymbolRow key={name}>
                  <Thumb $grey={grey}>{icon}</Thumb>
                  <span>{name}</span>
                  <LinkBadge aria-label={`Linked ${name}`}><LinkIcon /></LinkBadge>
                </SymbolRow>
              ))}
            </SymbolList>
          </AssetsPanel>

          <Canvas>
            <BoardColumn>
              <BoardLabel>Android Mobile – 1</BoardLabel>
              <Artboard>
                <AppHeader>
                  <button aria-label="Open menu"><Svg w={21} h={18}><path d="M0 0h21v2H0zM0 8h21v2H0zM0 16h10v2H0z" /></Svg></button>
                  <h1>VaraLagbe</h1>
                  <button aria-label="Add listing"><Plus s={20} t={2} /></button>
                </AppHeader>
                <SearchBox onSubmit={(e) => e.preventDefault()}>
                  <Magnifier s={20} t={2} />
                  <input aria-label="Search place" value={query} onChange={(e) => setQuery(e.target.value)} />
                  <Caret />
                  <button aria-label="View" type="button"><Dashboard s={20} /></button>
                </SearchBox>
                <MapArea>
                  <StreetMap />
                  <PinMark $x={179} $y={9} aria-label="Place 1"><Pin w={17} h={20} /></PinMark>
                  <PinMark $x={322} $y={65} aria-label="Place 2"><Pin w={17} h={20} /></PinMark>
                  <PinMark $x={71} $y={131} aria-label="Place 3"><Pin w={17} h={20} /></PinMark>
                  <PinMark $x={241} $y={204} aria-label="Current place"><Pin w={34} h={41} /></PinMark>
                  <CardList>
                    <Listing filled title="Soccho Tower" area="Alupotti" rooms="4" beds="3" top={19} gap={12} after={27} />
                    <Listing title="Mongol Villa" area="Hetem kha" rooms="2" beds="1" top={17} gap={8} after={11} />
                    <Listing top={15} after={0} />
                  </CardList>
                </MapArea>
              </Artboard>
            </BoardColumn>
          </Canvas>

          <Inspector>
            <AlignBlock $h={48} $pad="0">
              <AlignGroup>{alignA.map(([n, i]) => <button key={n} aria-label={n}>{i}</button>)}</AlignGroup>
              <AlignGroup>{alignB.map(([n, i]) => <button key={n} aria-label={n}>{i}</button>)}</AlignGroup>
            </AlignBlock>
            <SplitBlock $h={64} $pad="2px 16px 0">
              <RepeatButton>
                <Svg w={13}><path {...line} d="M.5.5H5.500V5.500H.5zM7.500.5H12.500V5.500H7.500zM.5 7.500H5.500V12.500H.5zM7.500 7.500H12.500V12.500H7.500z" /></Svg>
                Repeat Grid
              </RepeatButton>
              <BoolGroup>{bools.map(([n, i]) => <button key={n} aria-label={n}>{i}</button>)}</BoolGroup>
            </SplitBlock>
            <SplitBlock $h={48}>
              <Caps>COMPONENT</Caps>
              <IconButton aria-label="Add component" $w={10} $color="#aaa"><Plus s={10} /></IconButton>
            </SplitBlock>
            <Block $h={115} $pad="15px 14px">
              <TransformGrid>
                <label htmlFor="w">W</label><input id="w" defaultValue="0" />
                <Svg w={24} h={70}>
                  <path {...line} stroke="#d4d4d4" d="M2 10.500H8.500V22M2 55.500H8.500V44" />
                  <path d="M5 32h7v5H5z" fill="#bbb" /><path {...line} stroke="#bbb" d="M6.500 32V30.500Q8.500 27.500 10.500 30" />
                </Svg>
                <label htmlFor="x">X</label><input id="x" defaultValue="0" />
                <label htmlFor="h">H</label><input id="h" defaultValue="0" />
                <label htmlFor="y">Y</label><input id="y" defaultValue="0" />
              </TransformGrid>
            </Block>
            <Block $h={103} $pad="13px 16px">
              <Caps $tight>LAYOUT</Caps>
              <ToggleRow>
                <label htmlFor="resize">Responsive Resize</label>
                <Toggle id="resize" type="checkbox" checked={resize} onChange={() => setResize(!resize)} />
              </ToggleRow>
            </Block>
            <Block $h={112} $pad="16px 16px">
              <Caps>APPEARANCE</Caps>
              <OpacityRow>
                <div>
                  <label htmlFor="opacity">Opacity</label>
                  <Range id="opacity" type="range" value={opacity} onChange={(e) => setOpacity(e.target.value)} />
                </div>
                <OpacityValue aria-label="Opacity value" value={`${opacity}%`} readOnly />
              </OpacityRow>
            </Block>
          </Inspector>
        </Body>

        <TaskBar>
          <TaskGroup>
            {startApps.map(([n, i]) => <TaskButton key={n} aria-label={n} $w={36}>{i}</TaskButton>)}
            <AppButtons>
              {apps.map(([n, i, state]) => <TaskButton key={n} aria-label={n} $open={!!state} $active={state === "active"}>{i}</TaskButton>)}
            </AppButtons>
          </TaskGroup>
          <TaskGroup>
            {tray.map(([n, i]) => <TaskButton key={n} aria-label={n} $w={24}>{i}</TaskButton>)}
            <Clock>10:40 AM</Clock>
            <TaskButton aria-label="Notifications" $w={34}><Svg w={16} h={18}><path fillRule="evenodd" d="M0 1h16v13h-5l-3 4-1-4H0zM3 4h10v1H3zM3 7h10v1H3zM3 10h7v1H3z" /></Svg></TaskButton>
            <Edge />
          </TaskGroup>
        </TaskBar>
      </Shell>
    </>
  );
}
